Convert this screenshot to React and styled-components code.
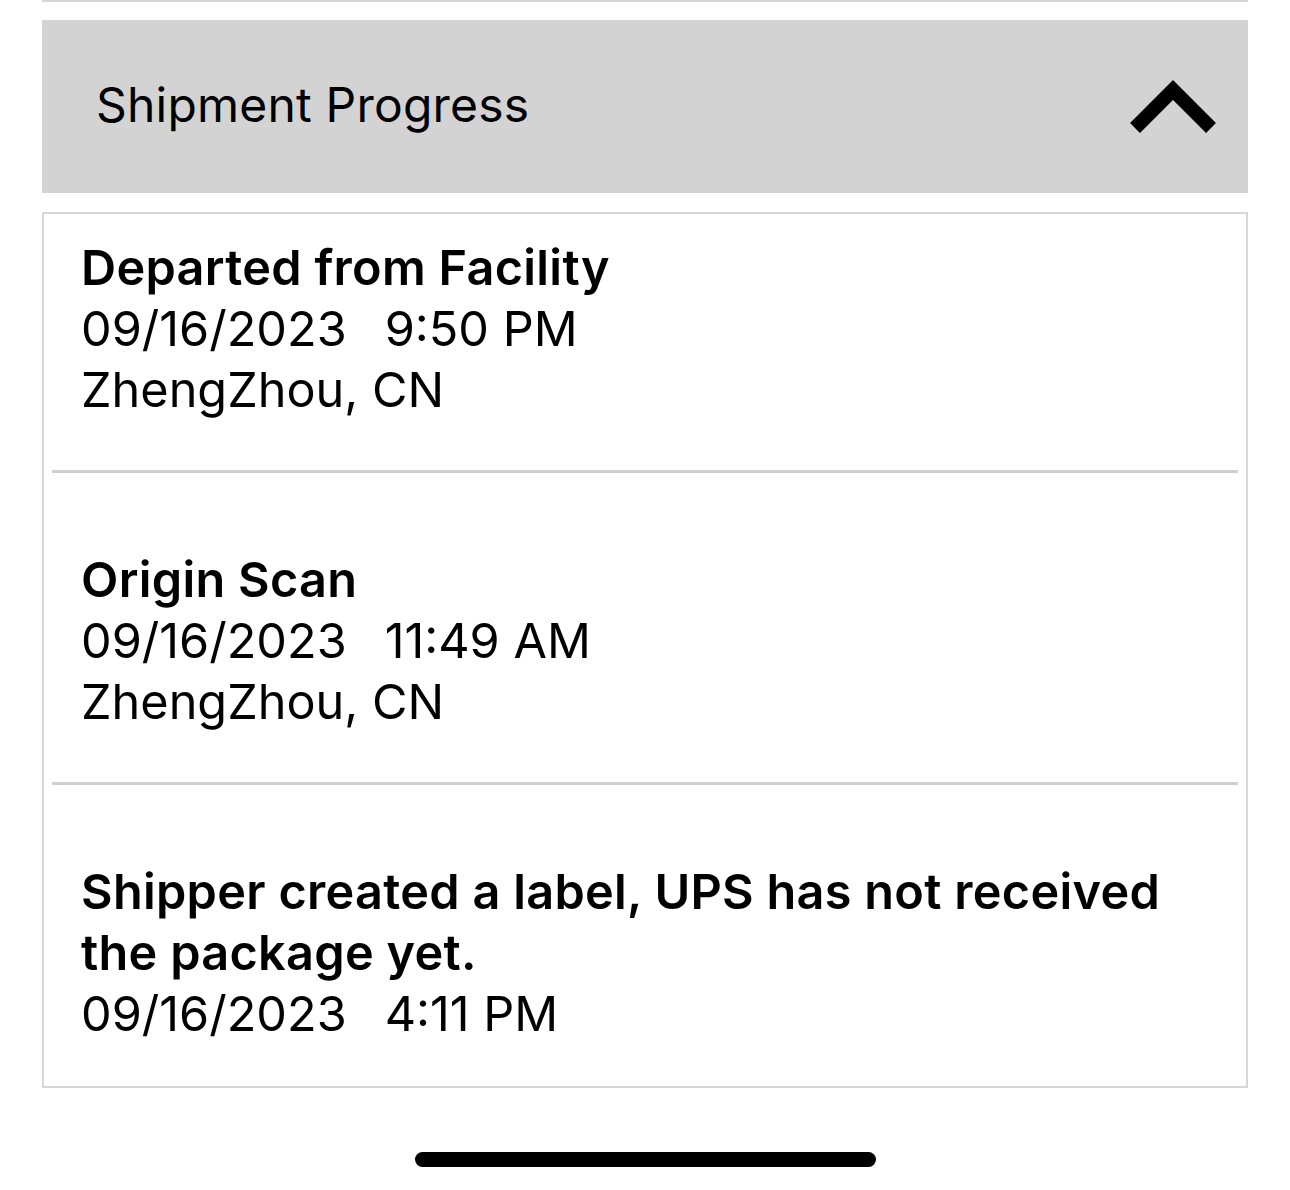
import React from "react";
import styled, { createGlobalStyle } from "styled-components";

const Global = createGlobalStyle`
  html, body { margin: 0; padding: 0; background: #ffffff; }
  body { font-family: Inter, "Noto Sans", "Liberation Sans", sans-serif; color: #000; }
`;

const Page = styled.div`
  width: 1290px;
  height: 1190px;
  box-sizing: border-box;
  padding: 0 42px;
  display: flex;
  flex-direction: column;
  overflow: hidden;
`;

const TopRule = styled.div`
  height: 2px;
  background: #d6d6d6;
`;

const Header = styled.div`
  margin-top: 18px;
  height: 173px;
  background: #d3d3d3;
  display: flex;
  align-items: center;
  justify-content: space-between;
  padding: 0 27px 0 54px;
`;

const HeaderTitle = styled.div`
  font-size: 48px;
  font-weight: 400;
  letter-spacing: 0.2px;
  margin-top: -4px;
`;

const Chevron = styled.svg`
  margin-top: 4px;
`;

const Card = styled.div`
  margin-top: 19px;
  border: 2px solid #d6d6d6;
  display: flex;
  flex-direction: column;
`;

const Item = styled.div`
  padding: ${(p) => (p.$first ? "23px" : "76px")} 60px ${(p) => (p.$last ? "42px" : "50px")} 37px;
  display: flex;
  flex-direction: column;
  font-size: 48.6px;
  line-height: 61px;
  letter-spacing: 0;
`;

const Title = styled.div`
  font-weight: 600;
  letter-spacing: 0.3px;
`;

const Line = styled.div`
  font-weight: 400;
  display: flex;
  gap: 38px;
`;

const Divider = styled.div`
  height: 3px;
  margin: 0 8px;
  background: #d1cdc8;
`;

const HomeBar = styled.div`
  margin: 64px auto 0;
  width: 461px;
  height: 15px;
  border-radius: 8px;
  background: #000;
`;

const events = [
  { title: "Departed from Facility", date: "09/16/2023", time: "9:50 PM", place: "ZhengZhou, CN" },
  { title: "Origin Scan", date: "09/16/2023", time: "11:49 AM", place: "ZhengZhou, CN" },
  { title: "Shipper created a label, UPS has not received the package yet.", date: "09/16/2023", time: "4:11 PM" },
];

export default function App() {
  return (
    <>
      <Global />
      <Page>
        <TopRule />
        <Header>
          <HeaderTitle>Shipment Progress</HeaderTitle>
          <Chevron width="92" height="60" viewBox="0 0 92 60">
            <polyline points="6,49 44,11 82,49" fill="none" stroke="#000" strokeWidth="14" strokeLinejoin="miter" strokeMiterlimit="10" />
          </Chevron>
        </Header>
        <Card>
          {events.map((e, i) => (
            <React.Fragment key={i}>
              {i > 0 && <Divider />}
              <Item $first={i === 0} $last={i === events.length - 1}>
                <Title>{e.title}</Title>
                <Line>
                  <span>{e.date}</span>
                  <span>{e.time}</span>
                </Line>
                {e.place && <Line>{e.place}</Line>}
              </Item>
            </React.Fragment>
          ))}
        </Card>
        <HomeBar />
      </Page>
    </>
  );
}
